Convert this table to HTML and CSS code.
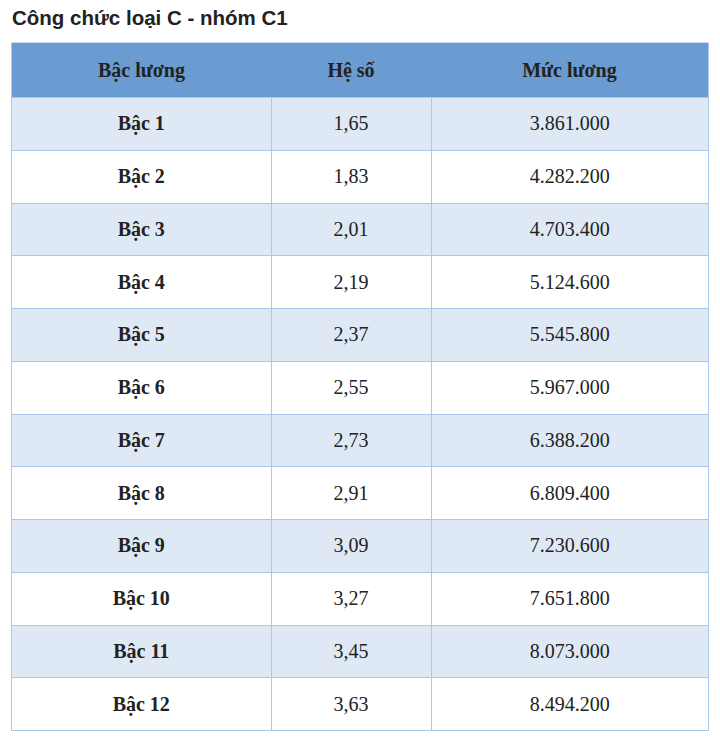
FILE: index.html
```html
<!DOCTYPE html>
<html lang="vi">
<head>
<meta charset="utf-8">
<link rel="stylesheet" href="styles.css">
</head>
<body>
<h2 class="title">Công chức loại C - nhóm C1</h2>
<table class="salary">
<thead>
<tr><th class="c1">Bậc lương</th><th class="c2">Hệ số</th><th class="c3">Mức lương</th></tr>
</thead>
<tbody>
<tr><td class="lvl">Bậc 1</td><td>1,65</td><td>3.861.000</td></tr>
<tr><td class="lvl">Bậc 2</td><td>1,83</td><td>4.282.200</td></tr>
<tr><td class="lvl">Bậc 3</td><td>2,01</td><td>4.703.400</td></tr>
<tr><td class="lvl">Bậc 4</td><td>2,19</td><td>5.124.600</td></tr>
<tr><td class="lvl">Bậc 5</td><td>2,37</td><td>5.545.800</td></tr>
<tr><td class="lvl">Bậc 6</td><td>2,55</td><td>5.967.000</td></tr>
<tr><td class="lvl">Bậc 7</td><td>2,73</td><td>6.388.200</td></tr>
<tr><td class="lvl">Bậc 8</td><td>2,91</td><td>6.809.400</td></tr>
<tr><td class="lvl">Bậc 9</td><td>3,09</td><td>7.230.600</td></tr>
<tr><td class="lvl">Bậc 10</td><td>3,27</td><td>7.651.800</td></tr>
<tr><td class="lvl">Bậc 11</td><td>3,45</td><td>8.073.000</td></tr>
<tr><td class="lvl">Bậc 12</td><td>3,63</td><td>8.494.200</td></tr>
</tbody>
</table>
</body>
</html>
```
FILE: styles.css
```css
html, body {
  margin: 0;
  padding: 0;
  background: #ffffff;
}
body {
  padding: 0 11px 0 11px;
}
.title {
  margin: 0;
  padding: 6px 0 0 1px;
  height: 42px;
  box-sizing: border-box;
  font-family: "Liberation Sans", Arial, sans-serif;
  font-weight: bold;
  font-size: 20.5px;
  line-height: 24px;
  color: #222222;
}
.salary {
  width: 698px;
  border-collapse: collapse;
  table-layout: fixed;
  font-family: "Liberation Serif", "Times New Roman", serif;
  font-size: 20px;
  color: #222222;
  border: 1px solid #a9c8ea;
}
.salary th {
  background: #6a9bd1;
  font-weight: bold;
  height: 54px;
  padding: 0;
  text-align: center;
  border-top: 1px solid #cddff2;
  border-bottom: 1px solid #a9c8ea;
}
.salary .c1 { width: 259px; }
.salary .c2 { width: 160px; }
.salary .c3 { width: auto; }
.salary td {
  height: 51.75px;
  padding: 0;
  text-align: center;
  border: 1px solid #a9c8ea;
}
.salary tbody tr:nth-child(odd) td {
  background: #dfe9f5;
}
.salary td.lvl {
  font-weight: bold;
}
```
